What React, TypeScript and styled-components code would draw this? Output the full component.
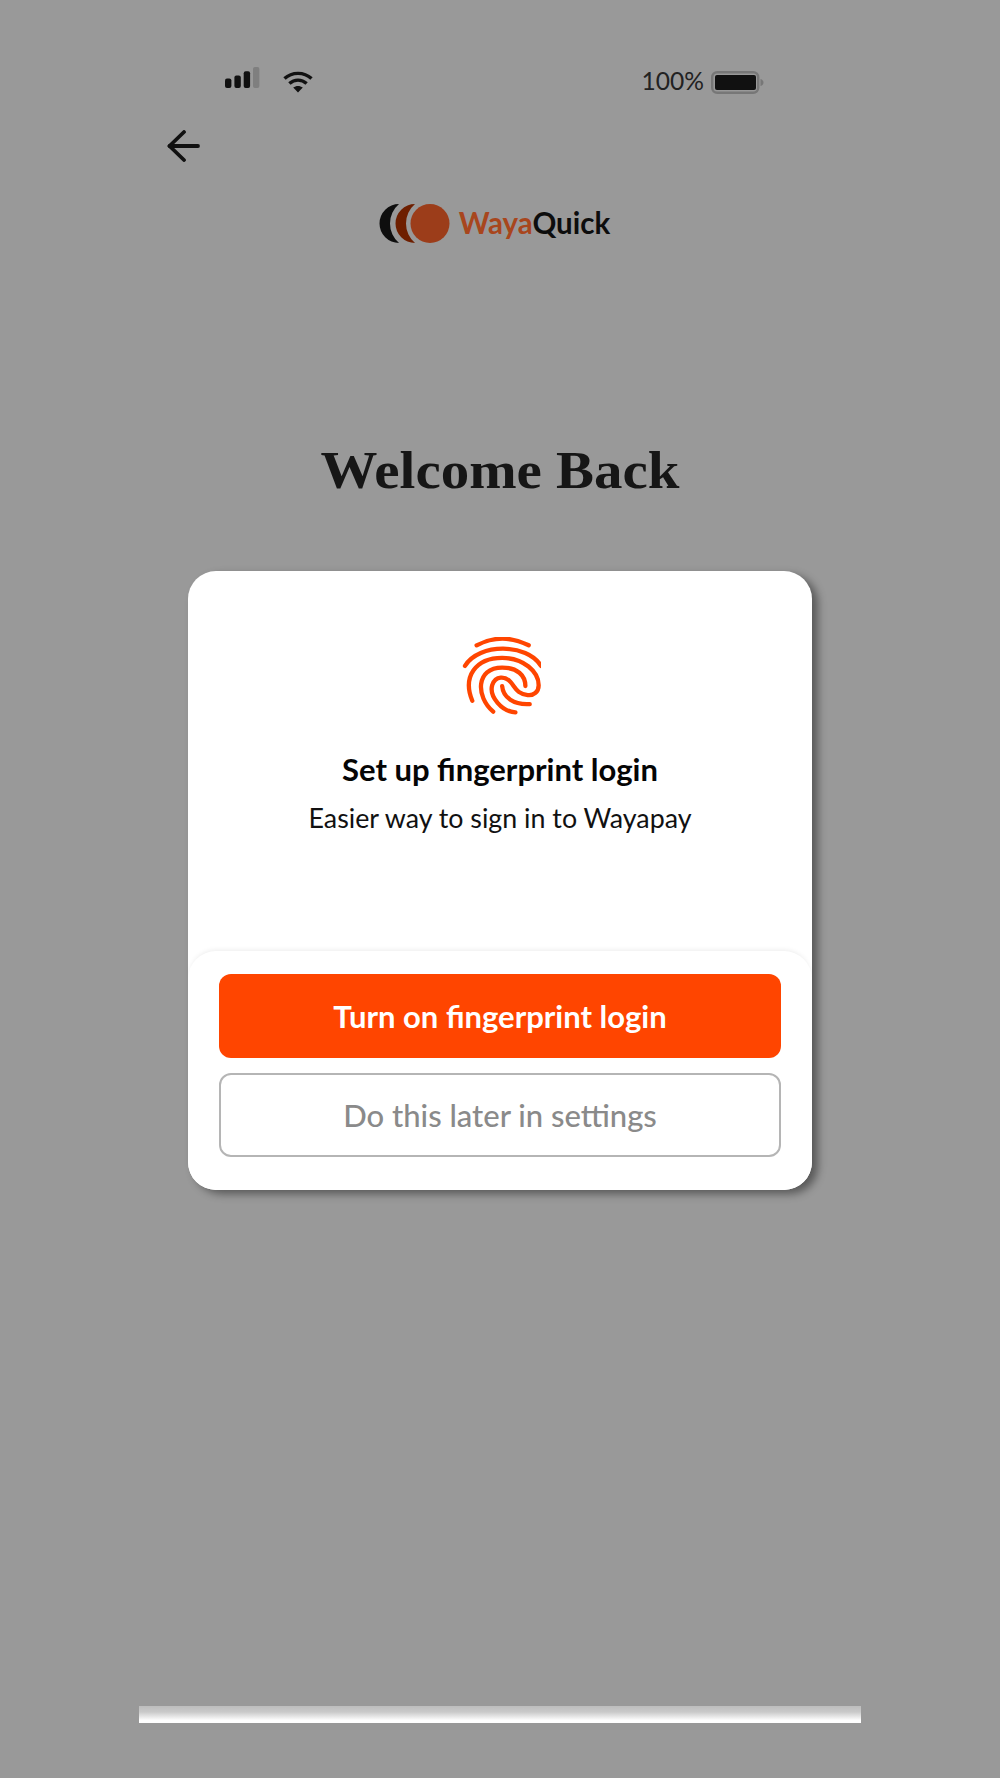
import styled, { createGlobalStyle } from 'styled-components';

const GlobalStyle = createGlobalStyle`
	html, body {
		margin: 0;
		padding: 0;
		background: #999999;
	}
	* {
		box-sizing: border-box;
	}
`;

const Phone = styled.main`
	width: 722px;
	height: 1778px;
	margin: 0 auto;
	padding-bottom: 55px;
	display: flex;
	flex-direction: column;
	font-family: 'Lato', 'Liberation Sans', sans-serif;
	overflow: hidden;
`;

const StatusBar = styled.div`
	display: flex;
	justify-content: space-between;
	align-items: center;
	height: 30px;
	margin-top: 67px;
	padding: 0 96px 0 86px;
`;

const StatusGroup = styled.div<{ $gap: number }>`
	display: flex;
	align-items: center;
	gap: ${props => props.$gap}px;
`;

const Percent = styled.span`
	font-size: 24.6px;
	line-height: 28px;
	padding-bottom: 2px;
	color: #222;
`;

const BackButton = styled.button`
	display: block;
	width: 33px;
	height: 32px;
	margin: 33px 0 0 28px;
	padding: 0;
	border: none;
	background: none;
`;

const LogoRow = styled.div`
	display: flex;
	justify-content: center;
	align-items: center;
	gap: 9px;
	height: 39px;
	margin-top: 42px;
	padding-right: 12px;
`;

const Wordmark = styled.div`
	font-size: 29.5px;
	font-weight: 700;
	line-height: 39px;
	padding-bottom: 2px;
	color: #0d0d0d;
`;

const WordmarkAccent = styled.span`
	color: #a8461d;
`;

const Title = styled.h1`
	margin: 198px 0 0;
	font-family: 'Liberation Serif', 'DejaVu Serif', serif;
	font-size: 52px;
	font-weight: 700;
	line-height: 60px;
	text-align: center;
	color: #161616;
	transform: scaleX(1.095);
`;

const Card = styled.section`
	width: 624px;
	height: 619px;
	margin: 70px auto 0;
	display: flex;
	flex-direction: column;
	align-items: center;
	padding-top: 66px;
	background: #fff;
	border-radius: 28px;
	box-shadow: 6px 4px 9px rgba(0, 0, 0, 0.42);
`;

const CardHeading = styled.h2`
	margin: 36px 0 0;
	font-size: 31px;
	font-weight: 700;
	line-height: 36px;
	color: #050505;
`;

const CardText = styled.p`
	margin: 14px 0 0;
	font-size: 26.8px;
	line-height: 34px;
	color: #111;
`;

const Sheet = styled.div`
	width: 100%;
	margin-top: auto;
	display: flex;
	flex-direction: column;
	gap: 15px;
	padding: 23px 31px 33px;
	background: #fff;
	border-radius: 28px;
	box-shadow: 0 -3px 5px -2px rgba(0, 0, 0, 0.08);
`;

const Button = styled.button<{ $primary?: boolean }>`
	height: 84px;
	width: 100%;
	border-radius: 12px;
	border: ${props => (props.$primary ? 'none' : '2px solid #b5b5b5')};
	background: ${props => (props.$primary ? '#ff4500' : '#fff')};
	color: ${props => (props.$primary ? '#fff' : '#8a8a8a')};
	font-family: inherit;
	font-size: 31px;
	font-weight: ${props => (props.$primary ? 700 : 500)};
`;

const HomeBar = styled.div`
	height: 17px;
	margin-top: auto;
	background: linear-gradient(#bdbdbd 0%, #c9c9c9 35%, #ffffff 85%);
`;

const SignalIcon = () => (
	<svg width="35" height="31" viewBox="0 0 35 31">
		<rect x="0" y="11.5" width="6.4" height="9.5" rx="2" fill="#111" />
		<rect x="9.4" y="8.5" width="6.4" height="12.5" rx="2" fill="#111" />
		<rect x="18.7" y="4.2" width="6.4" height="16.8" rx="2" fill="#111" />
		<rect x="28" y="0" width="6.4" height="21" rx="2" fill="#7f7f7f" />
	</svg>
);

const WifiIcon = () => (
	<svg width="30" height="22" viewBox="0 0 30 22" fill="none" stroke="#111" strokeWidth="3.4">
		<path d="M1.5 7.6C9 0.6 21 0.6 28.5 7.6" />
		<path d="M6.4 12.6C11.4 8 18.6 8 23.6 12.6" />
		<path d="M15 21.5L10.2 16.6C13 14.4 17 14.4 19.8 16.6Z" fill="#111" stroke="none" />
	</svg>
);

const BatteryIcon = () => (
	<svg width="54" height="23" viewBox="0 0 54 23">
		<rect x="1.2" y="1.2" width="46" height="20.6" rx="5" fill="none" stroke="#777" strokeWidth="2.4" />
		<rect x="4" y="4" width="41" height="15" rx="2" fill="#111" />
		<path d="M49.5 8C53.5 9 53.5 14 49.5 15Z" fill="#777" />
	</svg>
);

const BackIcon = () => (
	<svg width="33" height="32" viewBox="0 0 33 32" fill="none" stroke="#111" strokeWidth="3.8" strokeLinecap="round" strokeLinejoin="round">
		<path d="M31 16H2.5" />
		<path d="M17 2L2.5 16L17 30" />
	</svg>
);

const LogoMark = () => (
	<svg width="72" height="39" viewBox="0 0 72 39">
		<path d="M21 0A19.5 19.5 0 0 0 21 39A25.6 25.6 0 0 1 21 0Z" fill="#0e0e0e" />
		<path d="M37 0A19.5 19.5 0 0 0 37 39A25.6 25.6 0 0 1 37 0Z" fill="#6e1f00" />
		<circle cx="52" cy="19.5" r="19.5" fill="#9c3d1a" />
	</svg>
);

const FingerprintIcon = () => (
	<svg width="82" height="78" viewBox="116 80 245 235" fill="none" stroke="#ff4500" strokeWidth="13" strokeLinecap="round">
		<path d="M168 105Q245 65 325 105" />
		<path d="M133 167C175 98 320 98 362 167" />
		<path d="M155 272C125 200 165 143 245 143C310 143 355 185 355 225C355 245 340 257 322 255C290 252 285 232 270 215C255 198 225 195 215 225C205 260 245 305 285 307" />
		<path d="M218 305C165 260 165 172 245 172C290 172 315 195 315 228" />
		<path d="M245 228C248 262 280 285 328 282" />
	</svg>
);

const App = () => (
	<>
		<GlobalStyle />
		<Phone>
			<StatusBar>
				<StatusGroup $gap={23}>
					<SignalIcon />
					<WifiIcon />
				</StatusGroup>
				<StatusGroup $gap={7}>
					<Percent>100%</Percent>
					<BatteryIcon />
				</StatusGroup>
			</StatusBar>
			<BackButton aria-label="Back">
				<BackIcon />
			</BackButton>
			<LogoRow>
				<LogoMark />
				<Wordmark>
					<WordmarkAccent>Waya</WordmarkAccent>Quick
				</Wordmark>
			</LogoRow>
			<Title>Welcome Back</Title>
			<Card>
				<FingerprintIcon />
				<CardHeading>Set up fingerprint login</CardHeading>
				<CardText>Easier way to sign in to Wayapay</CardText>
				<Sheet>
					<Button $primary>Turn on fingerprint login</Button>
					<Button>Do this later in settings</Button>
				</Sheet>
			</Card>
			<HomeBar />
		</Phone>
	</>
);

export default App;
